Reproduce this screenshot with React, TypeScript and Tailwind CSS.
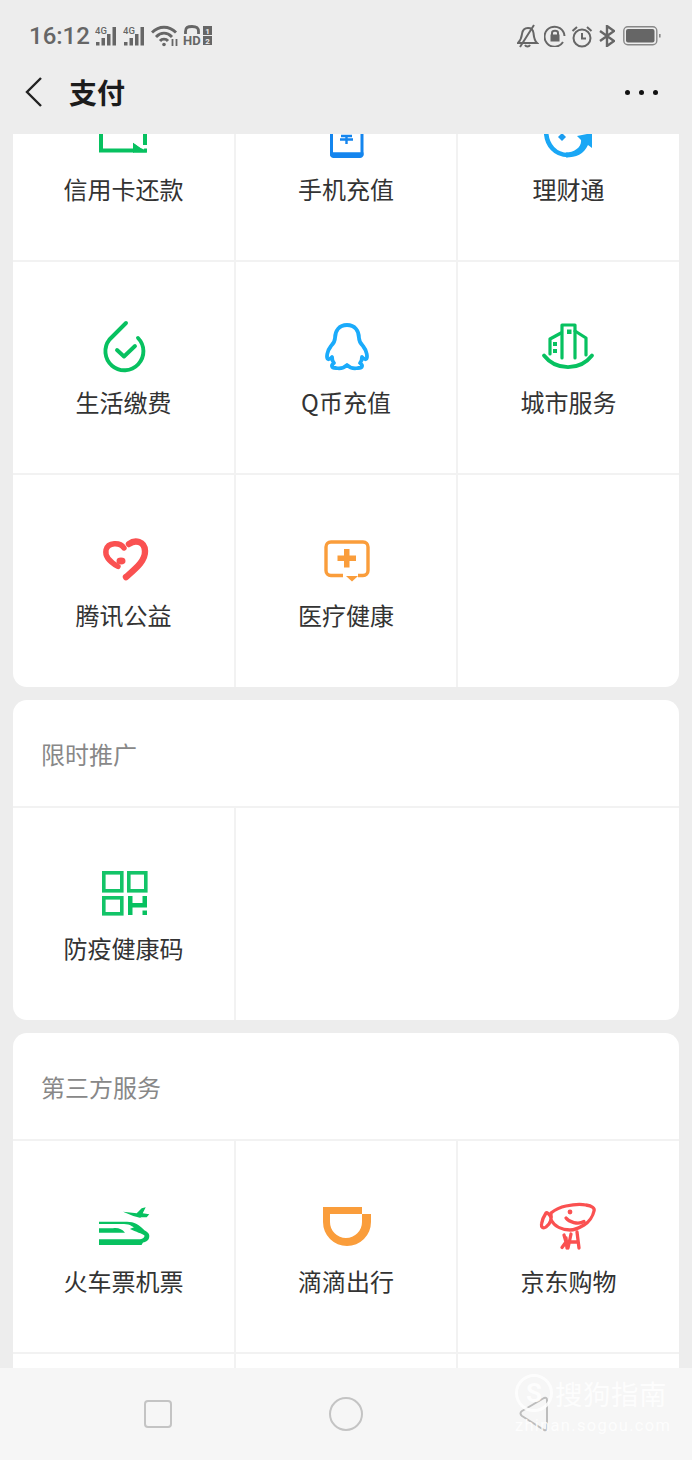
import type { ReactNode } from "react"

const cjk = "font-['Noto_Sans_CJK_SC','Noto_Sans',sans-serif]"

function Icon({ children }: { children: ReactNode }) {
  return (
    <svg width="60" height="60" viewBox="0 0 60 60" fill="none" className="shrink-0">
      {children}
    </svg>
  )
}

const CardIcon = () => (
  <Icon>
    <path d="M7 10V46.500H40" stroke="#07c160" strokeWidth="4" />
    <path d="M51 10V41" stroke="#07c160" strokeWidth="4" />
    <path d="M39 38.500L53 48.500H39Z" fill="#07c160" />
    <path d="M39 44.500H53V48.500H39Z" fill="#07c160" />
    <path d="M38 37L50 45" stroke="#fff" strokeWidth="1.200" />
  </Icon>
)

const PhoneIcon = () => (
  <Icon>
    <path d="M15.500 20V50H46V20" stroke="#1485ee" strokeWidth="3" />
    <path d="M14 48.500H47.500V50.500C47.500 52.500 46 54 44 54H17.500C15.500 54 14 52.500 14 50.500Z" fill="#1485ee" />
    <path d="M25 32H36M24 35.500H37M30.500 32V40" stroke="#1485ee" strokeWidth="2.400" />
  </Icon>
)

const LicaiIcon = () => (
  <Icon>
    <g transform="translate(-1 0)">
      <path d="M8 26C8 42 18 51 30 51" stroke="#1aa7f5" strokeWidth="4.600" />
      <path d="M24 29L28 33L24 37L20 33Z" fill="#1a9cf0" />
      <path d="M39 32L54 29V44L50 41C46 50 38 53.500 28 53.500V48.500C36 48.500 44 43 43 36Z" fill="#1aa7f5" />
    </g>
  </Icon>
)

const LifeIcon = () => (
  <Icon>
    <g transform="translate(-1 0)" stroke="#07c160" strokeWidth="3.900" strokeLinecap="round" strokeLinejoin="round">
      <path d="M33 6L16.500 22.500A19 19 0 1 0 45 21" />
      <path d="M24 33L31 39.500L42 29" />
    </g>
  </Icon>
)

const QQIcon = () => (
  <Icon>
    <path
      d="M31 8C23 8 19 14 19 21C19 24 18 26 15 29C11 34 10 41 12 42C13 43 15 41 16 40C16 43 17 45 18 46C15 48 15 51 20 51C25 52 29 50 31 48C33 50 37 52 42 51C47 51 47 48 44 46C45 45 46 43 46 40C47 41 49 43 50 42C52 41 51 34 47 29C44 26 43 24 43 21C43 14 39 8 31 8Z"
      stroke="#1aabfb"
      strokeWidth="3.800"
      strokeLinejoin="round"
    />
  </Icon>
)

const CityIcon = () => (
  <Icon>
    <g transform="translate(-1 0)">
      <g stroke="#07c160" strokeWidth="3.200" strokeLinecap="round" strokeLinejoin="round">
        <path d="M6 38.500C18 54 42 54 54 38.500" strokeWidth="3.800" />
        <path d="M12 37V22L23 16" />
        <path d="M24 41V8H37V41" />
        <path d="M37 14L48 21V38" />
      </g>
      <path d="M29 12.500H33.500V17H29ZM15 25H19V29H15ZM15 32H19V36H15Z" fill="#07c160" />
    </g>
  </Icon>
)

const HeartIcon = () => (
  <Icon>
    <g stroke="#fa5151" strokeLinecap="round" fill="none">
      <path d="M35 14C41 9.500 50.500 11 51 21C51.500 31 41 39 32 47" strokeWidth="6.400" />
      <path d="M30 18C26 12 14 12 12 20C10.500 27 16 32 24 36.500" strokeWidth="5.400" />
    </g>
    <ellipse cx="27" cy="31" rx="4.500" ry="3.400" fill="#fa5151" />
  </Icon>
)

const MedicalIcon = () => (
  <Icon>
    <path
      d="M27 45.500H15C12 45.500 10 43.500 10 40.500V17C10 14 12 12 15 12H47C50 12 52 14 52 17V40.500C52 43.500 50 45.500 47 45.500H42"
      stroke="#fa9d3b"
      strokeWidth="3.400"
    />
    <path d="M30 46H42L36 51.500Z" fill="#fa9d3b" />
    <path d="M28 19H33.500V25.500H40V31H33.500V37.500H28V31H21.500V25.500H28Z" fill="#fa9d3b" />
  </Icon>
)

const QrIcon = () => (
  <Icon>
    <g stroke="#07c160" strokeWidth="3.600" opacity="0.95">
      <rect x="9.800" y="9.800" width="18" height="18" />
      <rect x="34.800" y="9.800" width="17" height="18" />
      <rect x="9.800" y="34.800" width="18" height="16" />
    </g>
    <path d="M34 33H38.500V52H34ZM38 40H49V44.500H38ZM48.500 33H53V44.500H48.500ZM48.500 47.500H53V52H48.500Z" fill="#07c160" />
  </Icon>
)

const TrainIcon = () => (
  <Icon>
    <g fill="#07c160">
      <path d="M29 15.700L42.700 17.300L47.700 12.300L51.700 11.300L48.700 17.300L55.300 18.300L52.700 21.300L46 21.300L47.700 22.300L39.300 20Z" />
      <path d="M5 25.700H33C40 25.700 46 29 50 34L42 34C40 31 36 28 30 28H5Z" />
      <path d="M5 32.300H19C24 31.500 28 33 31 36.700H5Z" />
      <path d="M5 43.300H45C48 43.300 50.500 42 50.500 39.500C48 37.500 42 36 36 33C38 31 44 30.500 49 33.500C53 35.500 55.300 37 55.300 40C55.300 44 52.500 46 49 46.500L47.500 49H5Z" />
    </g>
  </Icon>
)

const DidiIcon = () => (
  <Icon>
    <path
      fillRule="evenodd"
      d="M7 11H46V18H55V26A24 24 0 0 1 7 26ZM14 18V26A16 16 0 0 0 46 26V18Z"
      fill="#fa9d3b"
    />
  </Icon>
)

const DogIcon = () => (
  <Icon>
    <g transform="translate(-2 0)">
      <g stroke="#fa5151" strokeWidth="3.300" strokeLinecap="round" strokeLinejoin="round">
        <path d="M14 17C19 13 24 11 29 10C36 8.500 44 8 49 9C55 10 58 12 57 15C56 20 52 26 47 29C42 32 38 34 33 34C26 34 18 31 14 24Z" />
        <path d="M14 21C12 18 10 16 9 17C7 20 5 24 4.500 28C4 31 6 33 9 31C11 29.500 13 27 14 24" />
        <path d="M29 22C32 26 41 29 47 25.500" />
        <path d="M27 39L29 46L25 51.500M29 42L30 52M34 38L31 52M40 36L42 52M34 46H40" />
      </g>
      <circle cx="33" cy="16" r="2.400" fill="#fa5151" />
    </g>
  </Icon>
)

function Cell({ icon, label, line = true, bottom = true }: { icon?: ReactNode; label?: string; line?: boolean; bottom?: boolean }) {
  return (
    <div
      className={
        "flex flex-col items-center pt-[55px] border-[#f2f2f2] " +
        (line ? "border-r-2 " : "") +
        (bottom ? "h-[213px] border-b-2" : "h-[212px]")
      }
    >
      {icon}
      {label && <div className="mt-[8px] text-[24px] leading-[34px] text-[#333333] whitespace-nowrap">{label}</div>}
    </div>
  )
}

function SectionTitle({ children }: { children: string }) {
  return (
    <div className="h-[108px] flex items-center pl-[28px] pt-[2px] border-b-2 border-[#f2f2f2] text-[24px] text-[#888888]">
      {children}
    </div>
  )
}

function Signal() {
  return (
    <svg width="24" height="22" viewBox="0 0 24 22" fill="#666666">
      <text x="0" y="9" fontSize="9.500" fontWeight="500" fontFamily="Roboto, sans-serif">4G</text>
      <rect x="1" y="17" width="3.500" height="3.500" />
      <rect x="6.500" y="13" width="3.500" height="7.500" />
      <rect x="12" y="9" width="3.500" height="11.500" />
      <rect x="17.500" y="2" width="3.500" height="18.500" />
    </svg>
  )
}

function StatusBar() {
  return (
    <div className="h-[70px] pt-[21px] flex items-start justify-between pl-[29px] pr-[31px] text-[#666666]">
      <div className="flex items-center h-[30px]">
        <span className="font-['Roboto',sans-serif] font-medium text-[24px] leading-[30px] w-[66px]">16:12</span>
        <Signal />
        <div className="w-[4px]" />
        <Signal />
        <svg width="28" height="22" viewBox="0 0 28 22" fill="none" stroke="#666666" strokeWidth="2.900" className="ml-[4px]">
          <path d="M1 7.500C8 0.500 18 0.500 25 7.500M5 12C10 7 16 7 21 12M9 16C11 13.500 15 13.500 17 16" />
          <circle cx="13" cy="19.500" r="1.800" fill="#666666" stroke="none" />
          <path d="M21.500 14V21M25.500 14V21" strokeWidth="1.800" />
        </svg>
        <svg width="30" height="22" viewBox="0 0 30 22" className="ml-[4px]">
          <path d="M2.500 9V6.500C2.500 2.500 4.500 1.500 9 1.500C13.500 1.500 15.500 2.500 15.500 6.500V9" fill="none" stroke="#666666" strokeWidth="2.800" />
          <text x="0" y="20" fontSize="13" fontWeight="700" fontFamily="Roboto, sans-serif" fill="#666666">HD</text>
          <rect x="20" y="1" width="9" height="9" fill="#666666" />
          <rect x="20" y="11" width="9" height="9" fill="#666666" />
          <text x="24.500" y="9" fontSize="8" fontWeight="700" textAnchor="middle" fontFamily="Roboto, sans-serif" fill="#ededed">1</text>
          <text x="24.500" y="19" fontSize="8" fontWeight="700" textAnchor="middle" fontFamily="Roboto, sans-serif" fill="#ededed">2</text>
        </svg>
      </div>
      <div className="flex items-center h-[30px]">
        <svg width="22" height="24" viewBox="0 0 22 24" fill="none" stroke="#666666" strokeWidth="2">
          <path d="M1 19H20C17 16 17 13 16.500 9C16 5.500 14 4 11 4C7.500 4 5.500 6 5 10C4.500 14 4 16 1 19Z" />
          <path d="M8 21C9 23 12 23 13 21M3 23L17 1" />
        </svg>
        <svg width="22" height="22" viewBox="0 0 22 22" fill="none" stroke="#666666" strokeWidth="2" className="ml-[5px]">
          <path d="M19 17A10 10 0 1 1 20.500 11" />
          <rect x="6.500" y="9.500" width="9" height="7" fill="#666666" stroke="none" />
          <path d="M8 10V8C8 5 14 5 14 8V10" />
        </svg>
        <svg width="22" height="23" viewBox="0 0 22 23" fill="none" stroke="#666666" strokeWidth="2" className="ml-[5px]">
          <circle cx="11" cy="13" r="8.500" />
          <path d="M11 8V13.500H15M1.500 6L6 2M20.500 6L16 2" />
        </svg>
        <svg width="16" height="22" viewBox="0 0 16 22" fill="none" stroke="#666666" strokeWidth="2.400" className="ml-[6px]">
          <path d="M1 6L15 16L8 21V1L15 6L1 16" />
        </svg>
        <svg width="38" height="20" viewBox="0 0 38 20" className="ml-[8px]">
          <rect x="0.800" y="0.800" width="33" height="18" rx="4" fill="none" stroke="#888888" strokeWidth="1.400" />
          <rect x="3" y="3" width="28.500" height="13.600" rx="2" fill="#666666" />
          <rect x="36" y="8" width="1.600" height="3.500" fill="#888888" />
        </svg>
      </div>
    </div>
  )
}

function TitleBar() {
  return (
    <div className="h-[64px] flex items-center pl-[24px] pr-[34px] pb-[20px] justify-between">
      <div className="flex items-center">
        <svg width="20" height="32" viewBox="0 0 20 32" fill="none" stroke="#222222" strokeWidth="2.400">
          <path d="M17 2L3 16L17 30" />
        </svg>
        <span className="ml-[25px] text-[28px] leading-[40px] font-semibold text-[#1c1c1c]">支付</span>
      </div>
      <div className="flex gap-[9px]">
        <span className="w-[5px] h-[5px] rounded-full bg-[#111111]" />
        <span className="w-[5px] h-[5px] rounded-full bg-[#111111]" />
        <span className="w-[5px] h-[5px] rounded-full bg-[#111111]" />
      </div>
    </div>
  )
}

function BottomNav() {
  return (
    <div className="relative h-[92px] shrink-0 bg-[#f6f6f6] flex items-center justify-center gap-[148px] pb-[1px]">
      <div className="w-[40px] flex justify-center">
        <div className="w-[28px] h-[28px] rounded-[4px] border-2 border-[#c4c4c4]" />
      </div>
      <div className="w-[40px] flex justify-center">
        <div className="w-[34px] h-[34px] rounded-full border-2 border-[#c4c4c4]" />
      </div>
      <svg width="40" height="36" viewBox="0 0 40 36" fill="none" stroke="#bdbdbd" strokeWidth="2">
        <path d="M8 15L30 2Q33 1 33 4V32Q33 35 30 34L8 20C6 18.500 6 16.500 8 15Z" strokeLinejoin="round" />
      </svg>
      <div className="absolute left-[515px] top-[6px] w-[160px] text-white opacity-85">
        <div className="flex items-center">
          <div className="w-[38px] h-[38px] rounded-full border-[3px] border-white flex items-center justify-center font-['Roboto',sans-serif] font-bold text-[26px] leading-none">
            S
          </div>
          <span className="ml-[2px] text-[27.500px] leading-[38px] tracking-[0.500px]">搜狗指南</span>
        </div>
        <div className="mt-[2px] font-['Roboto',sans-serif] text-[16.500px] leading-[24px] tracking-[1.300px] whitespace-nowrap">zhinan.sogou.com</div>
      </div>
    </div>
  )
}

export default function App() {
  return (
    <div className={"w-[692px] h-[1460px] flex flex-col overflow-hidden bg-[#ededed] " + cjk}>
      <div className="h-[134px] shrink-0">
        <StatusBar />
        <TitleBar />
      </div>

      <div className="flex-1 overflow-hidden px-[13px]">
        <div className="-mt-[85px] flex flex-col gap-[13px]">
          <div className="bg-white rounded-[14px] overflow-hidden grid grid-cols-[223px_222px_221px]">
            <Cell icon={<CardIcon />} label="信用卡还款" />
            <Cell icon={<PhoneIcon />} label="手机充值" />
            <Cell icon={<LicaiIcon />} label="理财通" line={false} />
            <Cell icon={<LifeIcon />} label="生活缴费" />
            <Cell icon={<QQIcon />} label="Q币充值" />
            <Cell icon={<CityIcon />} label="城市服务" line={false} />
            <Cell icon={<HeartIcon />} label="腾讯公益" bottom={false} />
            <Cell icon={<MedicalIcon />} label="医疗健康" bottom={false} />
            <Cell line={false} bottom={false} />
          </div>

          <div className="bg-white rounded-[14px] overflow-hidden">
            <SectionTitle>限时推广</SectionTitle>
            <div className="grid grid-cols-[223px_222px_221px]">
              <Cell icon={<QrIcon />} label="防疫健康码" bottom={false} />
            </div>
          </div>

          <div className="bg-white rounded-[14px] overflow-hidden">
            <SectionTitle>第三方服务</SectionTitle>
            <div className="grid grid-cols-[223px_222px_221px]">
              <Cell icon={<TrainIcon />} label="火车票机票" />
              <Cell icon={<DidiIcon />} label="滴滴出行" />
              <Cell icon={<DogIcon />} label="京东购物" line={false} />
              <Cell />
              <Cell />
              <Cell line={false} />
            </div>
          </div>
        </div>
      </div>

      <BottomNav />
    </div>
  )
}
